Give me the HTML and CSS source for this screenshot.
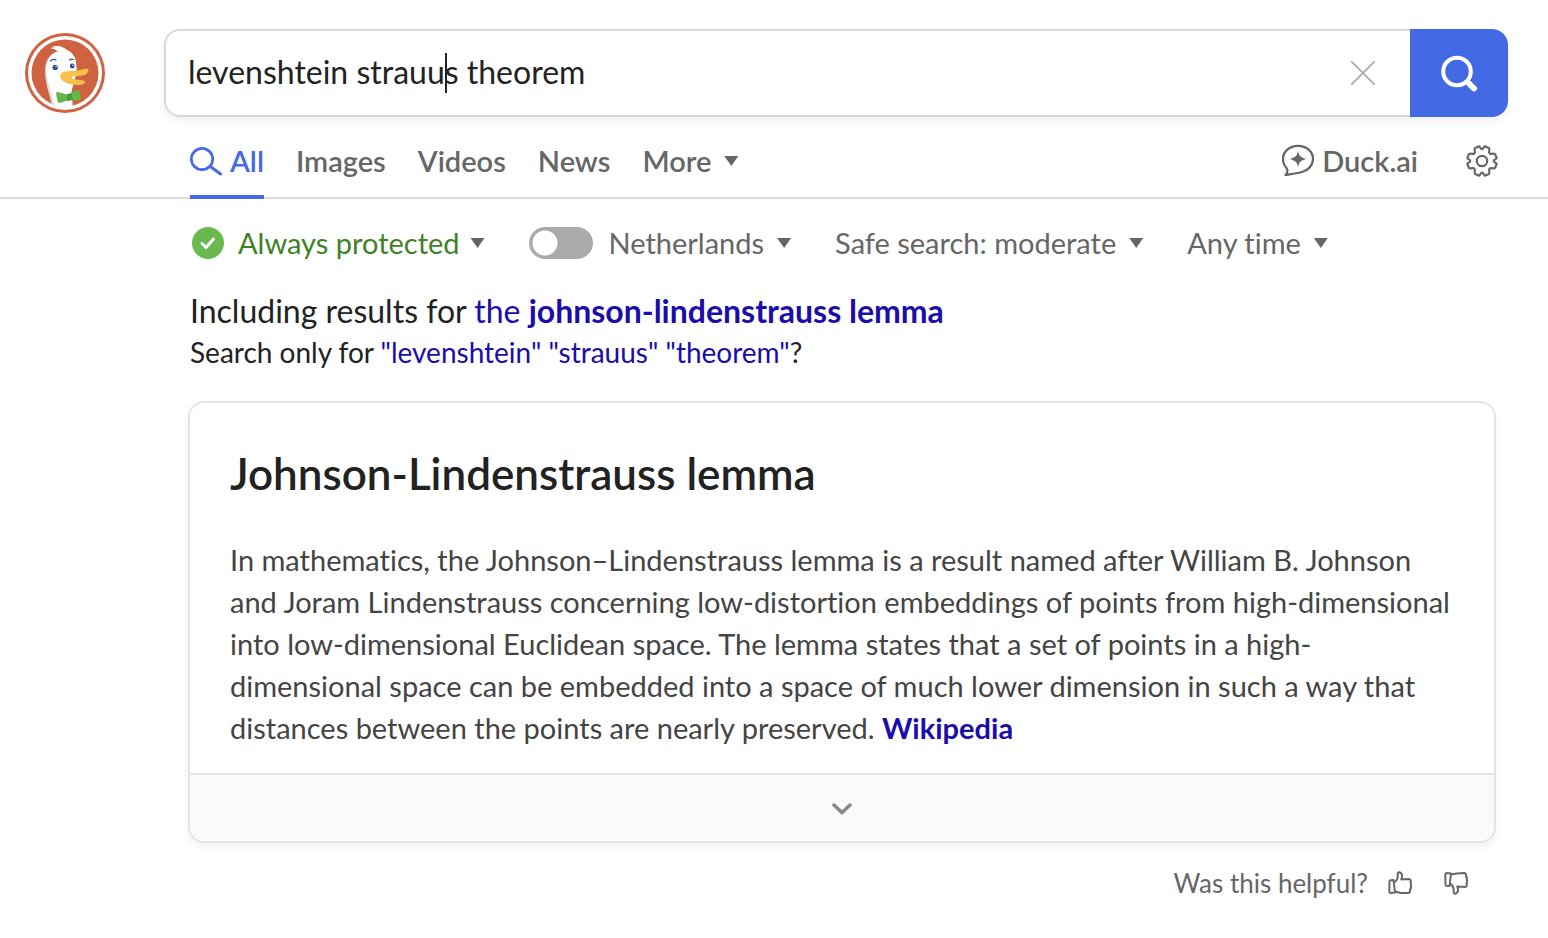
FILE: index.html
```html
<!DOCTYPE html>
<html lang="en">
<head>
    <meta charset="UTF-8">
    <meta name="viewport" content="width=device-width, initial-scale=1.0">
    <link rel="stylesheet" href="styles.css">
    <title>levenshtein strauus theorem at DuckDuckGo</title>
</head>
<body>

    <header class="header">
        <div class="search-row">
            <a class="logo" href="#" aria-label="DuckDuckGo">
                <svg viewBox="0 0 80 80" width="80" height="80">
                    <defs>
                        <clipPath id="disc"><circle cx="40" cy="40" r="35"/></clipPath>
                    </defs>
                    <circle cx="40" cy="40" r="40" fill="#cf6240"/>
                    <circle cx="40" cy="40" r="37" fill="#fff"/>
                    <circle cx="40" cy="40" r="33.500" fill="#cf6240"/>
                    <g clip-path="url(#disc)">
                        <path d="M28 76C25 63 20 50 20 38C20 27 25 21 32 18.500L50 24L52 40L40 76Z" fill="#ddd"/>
                        <path d="M30 76C28 64 22 50 21.500 38C21 27 26 21 33 18.500C30 16 27 15.500 25 15.500C28 14 30 14 32 15C30 13.500 28 13.500 27 13.500C34 12 39 14 42 17C48 19 51 25 51.500 34C52 44 45 56 47 64L48 76Z" fill="#fff"/>
                    </g>
                    <circle cx="30.200" cy="34.500" r="2.700" fill="#394a94"/>
                    <circle cx="31.200" cy="33.500" r="0.800" fill="#fff"/>
                    <circle cx="47.200" cy="33" r="2.400" fill="#394a94"/>
                    <circle cx="48" cy="32.200" r="0.700" fill="#fff"/>
                    <path d="M25.500 28Q28 25.500 31 27M44.500 27Q46.500 25.500 48.500 26.500" fill="none" stroke="#394a94" stroke-width="1.200" stroke-linecap="round"/>
                    <path d="M35 43C36 38.500 41 38 46 38C53 38 58 36 62 35.500C64.500 36.500 63.500 39.500 61 41.200C57 43.500 51 43 47.500 43.500C46 44 46 45.500 48 46C52 47 56 46.500 60 48C61 50.500 57 52.300 52 52C44 51.500 35 49 35 43Z" fill="#f6c04b"/>
                    <path d="M31 60.500Q31 58.500 33 59L42 61.500L52 57Q54.500 56.500 55 59L55.500 66Q55.500 68 53.500 67.500L46 66.500L35 70Q33 70.500 32.500 68Z" fill="#66b74a"/>
                    <path d="M41.500 61.500L46.500 60.500L48 67L42.500 68Z" fill="#4a9b38"/>
                </svg>
            </a>
            <form class="search">
                <div class="search-field">
                    <input class="search-input" type="text" value="levenshtein strauus theorem" aria-label="Search" spellcheck="false">
                    <span class="caret"></span>
                    <button class="clear" type="reset" aria-label="Clear search">
                        <svg viewBox="0 0 24 24" width="24" height="24">
                            <path d="M0.500 0.500L23.500 23.500M23.500 0.500L0.500 23.500" fill="none" stroke="#aaa" stroke-width="1.800" stroke-linecap="round"/>
                        </svg>
                    </button>
                </div>
                <button class="submit" type="submit" aria-label="Search">
                    <svg viewBox="0 0 38 38" width="38" height="38">
                        <circle cx="17" cy="17.500" r="13.800" fill="none" stroke="#fff" stroke-width="4"/>
                        <path d="M27 27.500L29 29.500" stroke="#fff" stroke-width="4"/>
                        <path d="M29.500 30L34 34.500" stroke="#fff" stroke-width="6" stroke-linecap="round"/>
                    </svg>
                </button>
            </form>
        </div>

        <nav class="tabs">
            <a class="tab active" href="#">
                <svg viewBox="0 0 32 32" width="32" height="32">
                    <circle cx="12" cy="15" r="10.700" fill="none" stroke="#4469e5" stroke-width="2.700"/>
                    <path d="M21 23L30.500 30" stroke="#4469e5" stroke-width="3" stroke-linecap="round"/>
                </svg>
                All
            </a>
            <a class="tab" href="#">Images</a>
            <a class="tab" href="#">Videos</a>
            <a class="tab" href="#">News</a>
            <button class="tab more" type="button">More <span class="arrow"></span></button>
            <a class="tab duck-ai" href="#">
                <svg viewBox="0 0 32 32" width="32" height="32">
                    <path d="M3.500 31C6 28.500 6 26.500 4.500 24C2 21.500 1 18.500 1 15C1 7.500 7.500 1.800 16 1.800C24.500 1.800 31 7.500 31 15C31 21.500 26 26.500 20 28C15 29.300 9 30 3.500 31Z" fill="none" stroke="#666" stroke-width="2.300" stroke-linejoin="round"/>
                    <path d="M16 6.500C17 12 18.500 13.500 24.500 15C18.500 16.500 17 18 16 23.500C15 18 13.500 16.500 7.500 15C13.500 13.500 15 12 16 6.500Z" fill="#666"/>
                </svg>
                Duck.ai
            </a>
            <button class="settings" type="button" aria-label="Settings">
                <svg viewBox="0 0 32 32" width="32" height="32">
                    <path d="M11.500 2.100Q13.400 0.400 14.200 2.600Q16 6 17.800 2.600Q18.600 0.400 20.500 2.100L22.600 2.700Q24 3.800 23.200 5.700Q22.500 9.500 26.300 8.800Q28.200 8 29.300 9.400L29.900 11.500Q31.600 13.400 29.400 14.200Q26 16 29.400 17.800Q31.600 18.600 29.900 20.500L29.300 22.600Q28.200 24 26.300 23.200Q22.500 22.500 23.200 26.300Q24 28.200 22.600 29.300L20.500 29.900Q18.600 31.600 17.800 29.400Q16 26 14.200 29.400Q13.400 31.600 11.500 29.900L9.400 29.300Q8 28.200 8.800 26.300Q9.500 22.500 5.700 23.200Q3.800 24 2.700 22.600L2.100 20.500Q0.400 18.600 2.600 17.800Q6 16 2.600 14.200Q0.400 13.400 2.100 11.500L2.700 9.400Q3.800 8 5.700 8.800Q9.500 9.500 8.800 5.700Q8 3.800 9.400 2.700Z" fill="none" stroke="#666" stroke-width="2.200" stroke-linejoin="round"/>
                    <circle cx="16" cy="16" r="5.200" fill="none" stroke="#666" stroke-width="2.200"/>
                </svg>
            </button>
        </nav>
    </header>

    <main class="results">
        <div class="filters">
            <button class="filter protected" type="button">
                <svg viewBox="0 0 32 32" width="32" height="32">
                    <circle cx="16" cy="16" r="16" fill="#6ab94e"/>
                    <path d="M10 16.500L14 20.500L21.500 12" fill="none" stroke="#fff" stroke-width="3" stroke-linecap="round" stroke-linejoin="round"/>
                </svg>
                Always protected <span class="arrow"></span>
            </button>
            <div class="region">
                <input class="toggle" type="checkbox" aria-label="Filter by region">
                <button class="filter" type="button">Netherlands <span class="arrow"></span></button>
            </div>
            <button class="filter" type="button">Safe search: moderate <span class="arrow"></span></button>
            <button class="filter" type="button">Any time <span class="arrow"></span></button>
        </div>

        <p class="including">Including results for <a href="#">the <b>johnson-lindenstrauss lemma</b></a></p>
        <p class="only">Search only for <a href="#">"levenshtein" "strauus" "theorem"</a>?</p>

        <article class="card">
            <div class="card-body">
                <h1>Johnson-Lindenstrauss lemma</h1>
                <p>In mathematics, the Johnson–Lindenstrauss lemma is a result named after William B. Johnson and Joram Lindenstrauss concerning low-distortion embeddings of points from high-dimensional into low-dimensional Euclidean space. The lemma states that a set of points in a high-dimensional space can be embedded into a space of much lower dimension in such a way that distances between the points are nearly preserved. <a href="#">Wikipedia</a></p>
            </div>
            <button class="expand" type="button" aria-label="Show more">
                <svg viewBox="0 0 20 12" width="20" height="12">
                    <path d="M2 2L10 9.500L18 2" fill="none" stroke="#888" stroke-width="3.500" stroke-linecap="round"/>
                </svg>
            </button>
        </article>

        <div class="feedback">
            <span>Was this helpful?</span>
            <button type="button" aria-label="Yes">
                <svg viewBox="0 0 24 24" width="24" height="24">
                    <path d="M1.500 10.500Q1.500 9.500 2.500 9.300L5.500 9L7 21.500L2.500 22Q1.300 22 1.300 20.500ZM6 11.500Q9.500 9.500 9.700 5.500V2.500Q10 1 11.500 1.300Q14.500 2.500 14 6L13.300 8.500L21 8Q23.500 8.700 22.500 11.500Q24 13 22.700 15Q23.500 17 22 18.500Q22.500 21.500 20.500 22L13 22L7 20.500" fill="none" stroke="#666" stroke-width="2" stroke-linejoin="round"/>
                </svg>
            </button>
            <button type="button" aria-label="No">
                <svg viewBox="0 0 24 24" width="24" height="24">
                    <path d="M1.500 13.500L1.300 3.500Q1.300 2 2.500 2L7 2.500L5.500 15L2.500 14.700Q1.500 14.500 1.500 13.500ZM6 12.500Q9.500 14.500 9.700 18.500V21.500Q10 23 11.500 22.700Q14.500 21.500 14 18L13.300 15.500L21 16Q23.500 15.300 22.500 12.500Q24 11 22.700 9Q23.500 7 22 5.500Q22.500 2.500 20.500 2L13 2.500L7 3.500" fill="none" stroke="#666" stroke-width="2" stroke-linejoin="round"/>
                </svg>
            </button>
        </div>
    </main>

</body>
</html>
```

FILE: styles.css
```css
* {
    box-sizing: border-box;
}
body {
    margin: 0;
    font-family: Lato, sans-serif;
    font-size: 28px;
    font-variant-ligatures: none;
    color: #222;
    background-color: #fff;
}
a {
    color: #1a0dab;
    text-decoration: none;
}
button {
    padding: 0;
    border: none;
    background: none;
    font: inherit;
    font-variant-ligatures: none;
    color: inherit;
    cursor: pointer;
}
svg {
    display: block;
    flex: none;
}
.header {
    border-bottom: 2px solid #d9d9d9;
}
.search-row {
    display: flex;
    align-items: center;
    gap: 59px;
    padding: 29px 40px 0 25px;
}
.search {
    flex: 1;
    display: flex;
    height: 88px;
    border-radius: 16px;
    box-shadow: 0 4px 8px rgba(0, 0, 0, 0.06);
}
.search-field {
    position: relative;
    flex: 1;
    display: flex;
    align-items: center;
    padding-right: 35px;
    border: 2px solid #d9d9d9;
    border-right: none;
    border-radius: 16px 0 0 16px;
}
.search-input {
    flex: 1;
    height: 84px;
    padding: 0 22px 4px;
    border: none;
    outline: none;
    background: none;
    font: inherit;
    font-size: 32px;
    color: #222;
}
.caret {
    position: absolute;
    left: 279px;
    top: 22px;
    width: 2px;
    height: 40px;
    background-color: #222;
}
.submit {
    display: flex;
    align-items: center;
    justify-content: center;
    width: 98px;
    background-color: #4469e5;
    border-radius: 0 16px 16px 0;
}
.tabs {
    display: flex;
    gap: 32px;
    height: 80px;
    padding: 0 50px 0 190px;
    font-size: 29px;
    color: #666;
}
.tab {
    display: flex;
    align-items: center;
    gap: 8px;
    height: 82px;
    padding: 8px 0 4px;
    font-weight: 600;
    color: #666;
}
.active {
    border-bottom: 4px solid #4469e5;
    padding-bottom: 0;
    color: #4469e5;
}
.duck-ai {
    margin-left: auto;
    margin-right: 16px;
}
.settings {
    padding-top: 8px;
}
.arrow {
    width: 14px;
    height: 10px;
    margin-top: 2px;
    margin-left: 5px;
    background-color: #666;
    clip-path: polygon(0 0, 100% 0, 50% 100%);
}
.results {
    padding: 24px 52px 0 190px;
}
.filters {
    display: flex;
    gap: 44px;
    font-size: 29px;
    color: #666;
}
.filter {
    display: flex;
    align-items: center;
    gap: 8px;
    height: 40px;
    padding-bottom: 2px;
}
.protected {
    padding-left: 2px;
    color: #3f8126;
}
.protected svg {
    margin-top: 2px;
    margin-right: 6px;
}
.protected .arrow {
    margin-left: 3px;
}
.region {
    display: flex;
    align-items: center;
    gap: 16px;
}
.toggle {
    appearance: none;
    width: 64px;
    height: 32px;
    margin: 0;
    border-radius: 16px;
    background: radial-gradient(circle at 16px 16px, #fff 12px, #aaa 13px);
}
.including {
    margin: 27px 0 0;
    font-size: 32px;
    line-height: 42px;
}
.only {
    margin: 0 0 29px;
    line-height: 40px;
}
.card {
    margin-left: -2px;
    border: 2px solid #e4e4e4;
    border-radius: 16px;
    box-shadow: 0 4px 8px rgba(0, 0, 0, 0.06);
    overflow: hidden;
}
.card-body {
    padding: 38px 40px 24px;
}
.card-body h1 {
    margin: 0 0 34px;
    font-size: 44px;
    font-weight: 600;
    line-height: 64px;
}
.card-body p {
    margin: 0;
    font-size: 29px;
    line-height: 42px;
    color: #444;
}
.card-body p a {
    font-weight: 700;
}
.expand {
    display: flex;
    align-items: center;
    justify-content: center;
    width: 100%;
    height: 68px;
    padding-top: 2px;
    border-top: 2px solid #e4e4e4;
    background-color: #fafafa;
}
.feedback {
    display: flex;
    align-items: center;
    justify-content: flex-end;
    gap: 32px;
    padding: 24px 28px 32px 0;
    font-size: 26px;
    line-height: 32px;
    color: #666;
}
.feedback span {
    margin-right: -12px;
}
```
